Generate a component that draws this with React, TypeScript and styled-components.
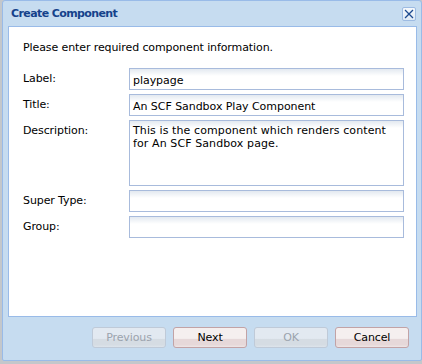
import React from "react";
import styled, { createGlobalStyle, css } from "styled-components";

const Global = createGlobalStyle`
  html, body { margin: 0; padding: 0; }
  body {
    background: #c3c7cb;
    width: 422px;
    height: 364px;
    overflow: hidden;
    font-family: "DejaVu Sans", Verdana, sans-serif;
    font-size: 11px;
  }
`;

const Window = styled.div`
  box-sizing: border-box;
  margin-left: 2px;
  width: 420px;
  height: 361px;
  border: 1px solid #99bbe8;
  border-radius: 3px 3px 2px 2px;
  background: #c6dcf0;
  display: flex;
  flex-direction: column;
  padding: 0 4px 0 5px;
`;

const Header = styled.div`
  height: 25px;
  display: flex;
  align-items: flex-start;
  justify-content: space-between;
  padding: 6px 0 0 3px;
  box-sizing: border-box;
`;

const Title = styled.div`
  color: #15428b;
  font-weight: bold;
  font-size: 11px;
  line-height: 14px;
  letter-spacing: -0.6px;
`;

const CloseButton = styled.div`
  width: 14px;
  height: 14px;
  box-sizing: border-box;
  margin-right: 1px;
  border: 1px solid #9dbbe2;
  border-radius: 2px;
  background: linear-gradient(#f4f8fc, #dfeaf6);
  display: flex;
  align-items: center;
  justify-content: center;
`;

const Body = styled.div`
  box-sizing: border-box;
  height: 291px;
  border: 1px solid #99bbe8;
  background: #ffffff;
  padding: 14px 12px 0 14px;
  color: #000;
`;

const Intro = styled.div`
  line-height: 14px;
  letter-spacing: -0.1px;
  margin-bottom: 13px;
`;

const Form = styled.div`
  display: grid;
  grid-template-columns: 106px 275px;
  row-gap: 4px;
`;

const Label = styled.div`
  line-height: 14px;
  padding-top: 4px;
  letter-spacing: -0.1px;
`;

const fieldBase = css`
  box-sizing: border-box;
  width: 275px;
  border: 1px solid #a8bbdc;
  background: linear-gradient(#e3e9f0, #ffffff 7px);
  font-family: "DejaVu Sans", Verdana, sans-serif;
  font-size: 11px;
  color: #000;
  margin: 0;
  outline: none;
`;

const TextField = styled.div`
  ${fieldBase};
  height: 22px;
  line-height: 14px;
  padding: 5px 3px 1px 3px;
  white-space: nowrap;
  overflow: hidden;
  letter-spacing: -0.05px;
`;

const TextArea = styled.div`
  ${fieldBase};
  height: 66px;
  line-height: 13px;
  padding: 3px 3px 1px 3px;
  letter-spacing: 0.1px;
`;

const Footer = styled.div`
  flex: 1;
  display: flex;
  justify-content: flex-end;
  align-items: flex-start;
  gap: 7px;
  padding: 10px 8px 0 0;
`;

const Button = styled.div<{ $disabled?: boolean }>`
  box-sizing: border-box;
  width: 74px;
  height: 21px;
  border-radius: 3px;
  display: flex;
  align-items: center;
  justify-content: center;
  font-size: 11px;
  letter-spacing: -0.1px;
  ${(p) =>
    p.$disabled
      ? css`
          border: 1px solid #bfcad8;
          color: #9ba3ad;
          background: linear-gradient(
            #e2e9f1 0,
            #e2e9f1 55%,
            #d5dce3 57%,
            #d5dce3 88%,
            #dde4eb 100%
          );
        `
      : css`
          border: 1px solid #c2a3a6;
          color: #000;
          background: linear-gradient(
            #f5efef 0,
            #f5efef 55%,
            #e6d8d9 57%,
            #e6d8d9 88%,
            #efe6e6 100%
          );
        `}
`;

const CloseIcon = () => (
  <svg width="10" height="10" viewBox="0 0 10 10">
    <path
      d="M1.5 1.5 L8.5 8.5 M8.5 1.5 L1.5 8.5"
      stroke="#1d4a8f"
      strokeWidth="1.3"
      strokeLinecap="square"
    />
  </svg>
);

export default function App() {
  return (
    <>
      <Global />
      <Window>
        <Header>
          <Title>Create Component</Title>
          <CloseButton>
            <CloseIcon />
          </CloseButton>
        </Header>
        <Body>
          <Intro>Please enter required component information.</Intro>
          <Form>
            <Label>Label:</Label>
            <TextField>playpage</TextField>
            <Label>Title:</Label>
            <TextField>An SCF Sandbox Play Component</TextField>
            <Label>Description:</Label>
            <TextArea>
              This is the component which renders content
              <br />
              for An SCF Sandbox page.
            </TextArea>
            <Label>Super Type:</Label>
            <TextField />
            <Label>Group:</Label>
            <TextField />
          </Form>
        </Body>
        <Footer>
          <Button $disabled>Previous</Button>
          <Button>Next</Button>
          <Button $disabled>OK</Button>
          <Button>Cancel</Button>
        </Footer>
      </Window>
    </>
  );
}
